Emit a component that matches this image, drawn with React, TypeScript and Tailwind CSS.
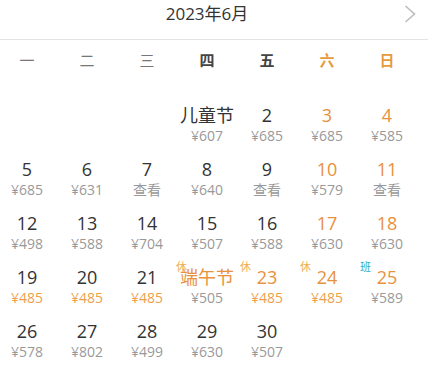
import React from "react";

type Cell = {
  label?: string;
  price?: string;
  orangeLabel?: boolean;
  orangePrice?: boolean;
  badge?: "休" | "班";
  badgeLeft?: string;
} | null;

const weekdays = [
  { t: "一", c: "text-[#777] font-normal" },
  { t: "二", c: "text-[#777] font-normal" },
  { t: "三", c: "text-[#777] font-normal" },
  { t: "四", c: "text-[#444] font-bold" },
  { t: "五", c: "text-[#444] font-bold" },
  { t: "六", c: "text-[#e59a3c] font-bold" },
  { t: "日", c: "text-[#e59a3c] font-bold" },
];

const W = (label: string, price: string): Cell => ({ label, price, orangeLabel: true });
const N = (label: string, price: string): Cell => ({ label, price });

const cells: Cell[] = [
  null, null, null,
  N("儿童节", "¥607"), N("2", "¥685"), W("3", "¥685"), W("4", "¥585"),
  N("5", "¥685"), N("6", "¥631"), N("7", "查看"), N("8", "¥640"), N("9", "查看"), W("10", "¥579"), W("11", "查看"),
  N("12", "¥498"), N("13", "¥588"), N("14", "¥704"), N("15", "¥507"), N("16", "¥588"), W("17", "¥630"), W("18", "¥630"),
  { label: "19", price: "¥485", orangePrice: true },
  { label: "20", price: "¥485", orangePrice: true },
  { label: "21", price: "¥485", orangePrice: true },
  { label: "端午节", price: "¥505", orangeLabel: true, badge: "休", badgeLeft: "left-[-1px]" },
  { label: "23", price: "¥485", orangeLabel: true, orangePrice: true, badge: "休", badgeLeft: "left-[3px]" },
  { label: "24", price: "¥485", orangeLabel: true, orangePrice: true, badge: "休", badgeLeft: "left-[3px]" },
  { label: "25", price: "¥589", orangeLabel: true, badge: "班", badgeLeft: "left-[3px]" },
  N("26", "¥578"), N("27", "¥802"), N("28", "¥499"), N("29", "¥630"), N("30", "¥507"),
];

export default function App() {
  return (
    <div
      className="w-[428px] h-[367px] bg-white overflow-hidden"
      style={{ fontFamily: '"Open Sans", "Noto Sans CJK SC", sans-serif' }}
    >
      <div className="h-[40px] border-b border-[#e3e3e3]">
        <div className="w-[420px] ml-[-3px] grid grid-cols-[1fr_auto_1fr] items-center h-[28px]">
          <div />
          <div className="text-[17px] leading-[28px] text-[#333]">2023年6月</div>
          <div className="flex justify-end pr-[1px]">
            <svg width="12" height="18" viewBox="0 0 12 18" fill="none">
              <polyline points="1.5,1 10.5,9 1.5,17" stroke="#bdbdbd" strokeWidth="1.6" />
            </svg>
          </div>
        </div>
      </div>
      <div className="w-[420px] ml-[-3px]">
        <div className="grid grid-cols-7 h-[40px] items-center">
          {weekdays.map((w) => (
            <div key={w.t} className={`text-center text-[15px] leading-[20px] ${w.c}`}>
              {w.t}
            </div>
          ))}
        </div>
        <div className="grid grid-cols-7 mt-[20px]">
          {cells.map((c, i) => (
            <div key={i} className="relative h-[54px] pt-[4px] flex flex-col items-center">
              {c && (
                <>
                  {c.badge && (
                    <span
                      className={`absolute top-[-1px] ${c.badgeLeft} text-[11px] leading-[12px] ${
                        c.badge === "班" ? "text-[#2bb0c6]" : "text-[#f0b04c]"
                      }`}
                    >
                      {c.badge}
                    </span>
                  )}
                  <div
                    className={`text-[18px] leading-[23px] whitespace-nowrap ${
                      c.orangeLabel ? "text-[#e8913e]" : "text-[#333]"
                    }`}
                  >
                    {c.label}
                  </div>
                  <div
                    className={`text-[14px] leading-[18px] whitespace-nowrap ${
                      c.orangePrice ? "text-[#eea04a]" : "text-[#999]"
                    }`}
                  >
                    {c.price}
                  </div>
                </>
              )}
            </div>
          ))}
        </div>
      </div>
    </div>
  );
}
